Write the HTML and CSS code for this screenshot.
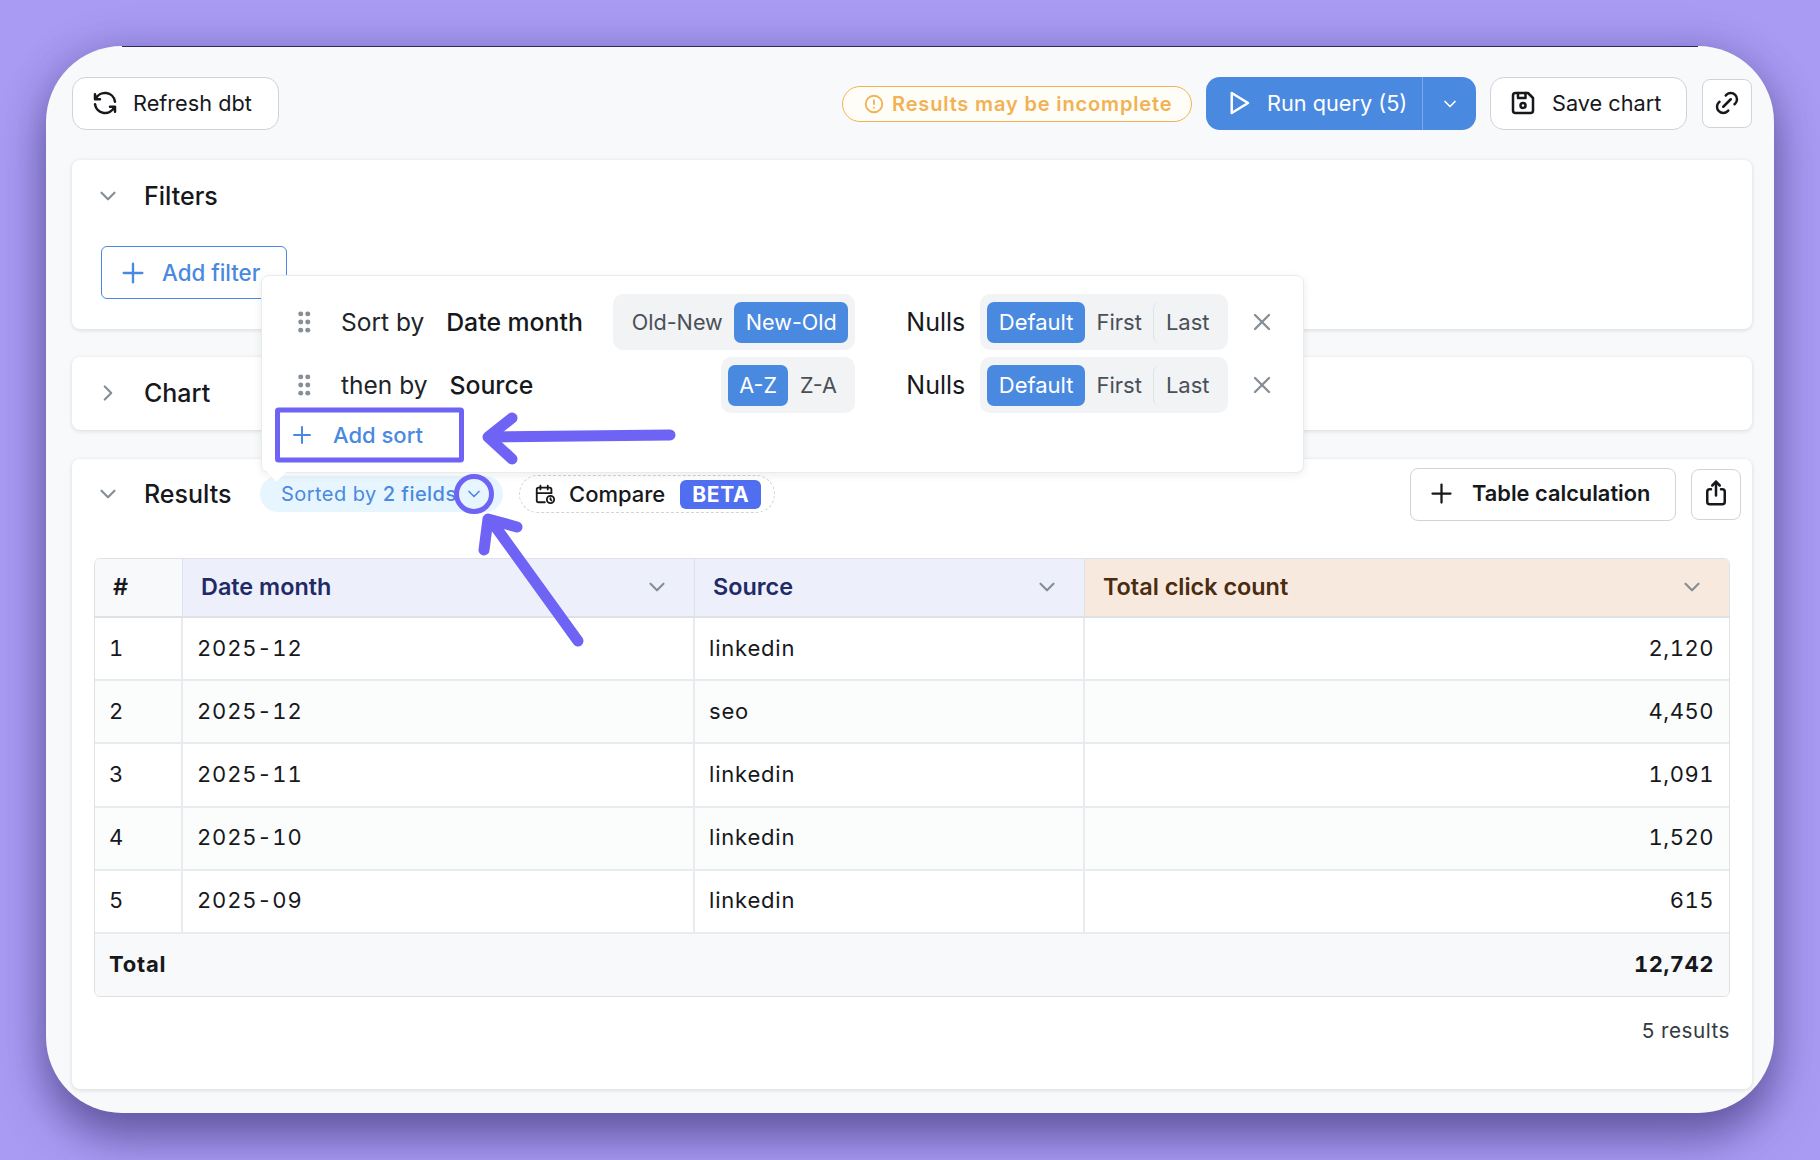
FILE: index.html
```html
<!DOCTYPE html>
<html lang="en">
<head>
    <meta charset="UTF-8">
    <title>Results sorting</title>
    <link rel="stylesheet" href="styles.css">
</head>
<body>
    <svg class="sprite" xmlns="http://www.w3.org/2000/svg">
        <symbol id="i-refresh" viewBox="0 0 24 24"><path d="M20 11a8.1 8.1 0 0 0 -15.5 -2m-.5 -4v4h4"/><path d="M4 13a8.1 8.1 0 0 0 15.5 2m.5 4v-4h-4"/></symbol>
        <symbol id="i-alert" viewBox="0 0 24 24"><circle cx="12" cy="12" r="9"/><path d="M12 8v4"/><path d="M12 16h.01"/></symbol>
        <symbol id="i-play" viewBox="0 0 24 24"><path d="M7 4v16l13 -8z"/></symbol>
        <symbol id="i-down" viewBox="0 0 24 24"><path d="M6 9l6 6l6 -6"/></symbol>
        <symbol id="i-right" viewBox="0 0 24 24"><path d="M9 6l6 6l-6 6"/></symbol>
        <symbol id="i-save" viewBox="0 0 24 24"><path d="M6 4h10l4 4v10a2 2 0 0 1 -2 2h-12a2 2 0 0 1 -2 -2v-12a2 2 0 0 1 2 -2"/><circle cx="12" cy="14" r="2"/><path d="M14 4v4h-6v-4"/></symbol>
        <symbol id="i-link" viewBox="0 0 24 24"><path d="M9 15l6 -6"/><path d="M11 6l.463 -.536a5 5 0 0 1 7.071 7.072l-.534 .464"/><path d="M13 18l-.397 .534a5.068 5.068 0 0 1 -7.127 0a4.972 4.972 0 0 1 0 -7.071l.524 -.463"/></symbol>
        <symbol id="i-plus" viewBox="0 0 24 24"><path d="M12 4v16"/><path d="M4 12h16"/></symbol>
        <symbol id="i-x" viewBox="0 0 24 24"><path d="M18 6l-12 12"/><path d="M6 6l12 12"/></symbol>
        <symbol id="i-share" viewBox="0 0 24 24"><path d="M8 9h-1a2 2 0 0 0 -2 2v8a2 2 0 0 0 2 2h10a2 2 0 0 0 2 -2v-8a2 2 0 0 0 -2 -2h-1"/><path d="M12 14v-11"/><path d="M9 6l3 -3l3 3"/></symbol>
        <symbol id="i-cal" viewBox="0 0 24 24"><path d="M11.795 21h-6.795a2 2 0 0 1 -2 -2v-12a2 2 0 0 1 2 -2h12a2 2 0 0 1 2 2v4"/><circle cx="18" cy="18" r="4"/><path d="M15 3v4"/><path d="M7 3v4"/><path d="M3 11h16"/><path d="M18 16.496v1.504l1 1"/></symbol>
        <symbol id="i-grip" viewBox="0 0 24 24"><circle cx="9" cy="4.5" r="2.3"/><circle cx="9" cy="12" r="2.3"/><circle cx="9" cy="19.5" r="2.3"/><circle cx="15.5" cy="4.5" r="2.3"/><circle cx="15.5" cy="12" r="2.3"/><circle cx="15.5" cy="19.5" r="2.3"/></symbol>
    </svg>

    <div class="window">
        <div class="topbar">
            <button class="btn btn-refresh"><svg class="icon icon-30"><use href="#i-refresh"/></svg>Refresh dbt</button>
            <div class="warning"><svg class="icon icon-22"><use href="#i-alert"/></svg>Results may be incomplete</div>
            <div class="run">
                <div class="run-main"><svg class="icon icon-30"><use href="#i-play"/></svg>Run query (5)</div>
                <div class="run-more"><svg class="icon icon-20"><use href="#i-down"/></svg></div>
            </div>
            <button class="btn btn-save"><svg class="icon icon-30"><use href="#i-save"/></svg>Save chart</button>
            <button class="btn btn-link"><svg class="icon icon-30"><use href="#i-link"/></svg></button>
        </div>

        <div class="card card-filters">
            <div class="card-head">
                <svg class="icon icon-26 muted"><use href="#i-down"/></svg>
                <span class="card-title">Filters</span>
            </div>
            <button class="btn-add-filter"><svg class="icon icon-28"><use href="#i-plus"/></svg>Add filter</button>
        </div>

        <div class="card card-chart">
            <div class="card-head">
                <svg class="icon icon-26 muted"><use href="#i-right"/></svg>
                <span class="card-title">Chart</span>
            </div>
        </div>

        <div class="card card-results">
            <div class="results-head">
                <svg class="icon icon-26 muted results-chevron"><use href="#i-down"/></svg>
                <span class="card-title results-title">Results</span>
                <div class="sorted-pill">Sorted by <b>2 fields</b><svg class="icon icon-20"><use href="#i-down"/></svg></div>
                <div class="compare-pill">
                    <svg class="icon icon-22"><use href="#i-cal"/></svg>
                    <span>Compare</span>
                    <span class="beta">BETA</span>
                </div>
                <button class="btn btn-calc"><svg class="icon icon-27"><use href="#i-plus"/></svg>Table calculation</button>
                <button class="btn btn-share"><svg class="icon icon-30"><use href="#i-share"/></svg></button>
            </div>

            <table class="results-table">
                <colgroup>
                    <col class="col-num"><col class="col-date"><col class="col-source"><col>
                </colgroup>
                <thead>
                    <tr>
                        <th class="th-num">#</th>
                        <th class="th-dim"><div class="th-inner">Date month<svg class="icon icon-26 muted"><use href="#i-down"/></svg></div></th>
                        <th class="th-dim"><div class="th-inner">Source<svg class="icon icon-26 muted"><use href="#i-down"/></svg></div></th>
                        <th class="th-metric"><div class="th-inner">Total click count<svg class="icon icon-26 muted"><use href="#i-down"/></svg></div></th>
                    </tr>
                </thead>
                <tbody>
                    <tr><td>1</td><td>2025-12</td><td>linkedin</td><td class="num">2,120</td></tr>
                    <tr class="alt"><td>2</td><td>2025-12</td><td>seo</td><td class="num">4,450</td></tr>
                    <tr><td>3</td><td>2025-11</td><td>linkedin</td><td class="num">1,091</td></tr>
                    <tr class="alt"><td>4</td><td>2025-10</td><td>linkedin</td><td class="num">1,520</td></tr>
                    <tr><td>5</td><td>2025-09</td><td>linkedin</td><td class="num">615</td></tr>
                </tbody>
                <tfoot>
                    <tr><td colspan="3">Total</td><td class="num">12,742</td></tr>
                </tfoot>
            </table>
            <div class="results-count">5 results</div>
        </div>

        <div class="sort-popover">
            <div class="sort-row">
                <svg class="icon-grip"><use href="#i-grip"/></svg>
                <span class="sort-label">Sort by</span>
                <span class="sort-field">Date month</span>
                <div class="toggle toggle-dir">
                    <span class="opt">Old-New</span><span class="opt on">New-Old</span>
                </div>
                <span class="nulls">Nulls</span>
                <div class="toggle">
                    <span class="opt on">Default</span><span class="opt">First</span><span class="opt sep">Last</span>
                </div>
                <svg class="icon icon-28 muted close"><use href="#i-x"/></svg>
            </div>
            <div class="sort-row">
                <svg class="icon-grip"><use href="#i-grip"/></svg>
                <span class="sort-label">then by</span>
                <span class="sort-field">Source</span>
                <div class="toggle toggle-dir">
                    <span class="opt on">A-Z</span><span class="opt">Z-A</span>
                </div>
                <span class="nulls">Nulls</span>
                <div class="toggle">
                    <span class="opt on">Default</span><span class="opt">First</span><span class="opt sep">Last</span>
                </div>
                <svg class="icon icon-28 muted close"><use href="#i-x"/></svg>
            </div>
            <div class="add-sort"><svg class="icon icon-24"><use href="#i-plus"/></svg>Add sort</div>
        </div>
    </div>

    <!-- hand drawn annotations on top of the screenshot -->
    <svg class="marks" viewBox="0 0 1820 1160" xmlns="http://www.w3.org/2000/svg">
        <rect x="277.5" y="410" width="184" height="50" rx="1"/>
        <circle cx="474" cy="494" r="17.5"/>
        <g class="arrow">
            <path d="M670 435L490 437"/>
            <path d="M512 418L488 437L512 459"/>
            <path d="M578 641L492 522"/>
            <path d="M517 527L488 519L484 550"/>
        </g>
    </svg>
</body>
</html>
```

FILE: styles.css
```css
* {
    box-sizing: border-box;
}

html, body {
    margin: 0;
    height: 100%;
}

body {
    position: relative;
    overflow: hidden;
    padding: 46px;
    background: #a99bf4;
    font-family: Inter, "Liberation Sans", sans-serif;
    font-size: 21.7px;
    color: #16181c;
}

.sprite {
    display: none;
}

.icon {
    flex: none;
    fill: none;
    stroke: currentColor;
    stroke-width: 2;
    stroke-linecap: round;
    stroke-linejoin: round;
}

.icon-20 { width: 20px; height: 20px; }
.icon-22 { width: 22px; height: 22px; }
.icon-24 { width: 24px; height: 24px; }
.icon-26 { width: 26px; height: 26px; }
.icon-27 { width: 27px; height: 27px; }
.icon-28 { width: 28px; height: 28px; }
.icon-30 { width: 30px; height: 30px; }

.muted {
    color: #868e96;
}

/* window */
.window {
    position: relative;
    width: 1728px;
    height: 1067px;
    padding: 31px 22px 22px 26px;
    background: #f8f9fa;
    border-radius: 76px;
    box-shadow: 0 26px 44px rgba(45, 35, 100, 0.5), 0 0 40px rgba(45, 35, 100, 0.22);
}

.window::before {
    content: "";
    position: absolute;
    top: 0;
    left: 76px;
    right: 76px;
    height: 1px;
    background: #2c2a5e;
}

/* top bar */
.topbar {
    display: flex;
    align-items: center;
    height: 53px;
}

.btn {
    display: flex;
    align-items: center;
    justify-content: center;
    height: 53px;
    padding: 0 0 2px;
    background: #fff;
    border: 1px solid #ced4da;
    border-radius: 14px;
    font: inherit;
    color: inherit;
}

.btn-refresh {
    justify-content: flex-start;
    width: 207px;
    padding-left: 17px;
    gap: 13px;
}

.warning {
    display: flex;
    align-items: center;
    gap: 7px;
    width: 350px;
    height: 36px;
    margin-left: auto;
    padding-left: 20px;
    border: 1px solid #f0b254;
    border-radius: 18px;
    background: #fffdf8;
    color: #f0b254;
    font-size: 20px;
    font-weight: 600;
    letter-spacing: 0.85px;
}

.run {
    display: flex;
    width: 270px;
    height: 53px;
    margin-left: 14px;
    background: #4a89e0;
    border-radius: 14px;
    color: #fff;
}

.run-main {
    display: flex;
    align-items: center;
    gap: 14px;
    width: 217px;
    padding: 0 0 2px 17px;
    border-right: 1px solid #7ea9e8;
}

.run-more {
    display: flex;
    flex: 1;
    align-items: center;
    justify-content: center;
}

.btn-save {
    justify-content: flex-start;
    width: 197px;
    margin-left: 14px;
    padding-left: 17px;
    gap: 14px;
}

.btn-link {
    width: 50px;
    height: 49px;
    margin-left: 15px;
    border-radius: 8px;
}

/* cards */
.card {
    background: #fff;
    border-radius: 8px;
    box-shadow: 0 1px 4px rgba(20, 20, 40, 0.14);
}

.card-head {
    display: flex;
    align-items: center;
    gap: 23px;
    height: 72px;
    padding-left: 23px;
}

.card-title {
    font-size: 25px;
    font-weight: 500;
}

.card-filters {
    height: 169px;
    margin-top: 30px;
}

.btn-add-filter {
    display: flex;
    align-items: center;
    gap: 15px;
    width: 186px;
    height: 53px;
    margin: 14px 0 0 29px;
    padding: 0 0 0 17px;
    background: #fff;
    border: 1px solid #4a89e0;
    border-radius: 6px;
    color: #4a89e0;
    font: inherit;
    font-size: 22.3px;
    font-weight: 500;
}

.card-chart {
    height: 73px;
    margin-top: 28px;
}

.card-results {
    height: 630px;
    margin-top: 29px;
    padding: 8px 11px 0 22px;
}

.results-head {
    display: flex;
    align-items: center;
    height: 54px;
}

.results-chevron {
    margin-left: 1px;
}

.results-title {
    width: 116px;
    margin-left: 23px;
}

.sorted-pill {
    display: flex;
    align-items: center;
    width: 243px;
    height: 36px;
    padding-left: 21px;
    background: #e7f5ff;
    border-radius: 18px;
    color: #4a89e0;
    font-size: 20px;
    letter-spacing: 0.45px;
    white-space: pre;
}

.sorted-pill b {
    font-weight: 500;
}

.sorted-pill .icon {
    margin-left: 7px;
}

.compare-pill {
    display: flex;
    align-items: center;
    width: 256px;
    height: 38px;
    margin-left: 16px;
    padding-left: 14px;
    border: 1px dashed #ced4da;
    border-radius: 19px;
    font-size: 22px;
    font-weight: 500;
}

.compare-pill span:first-of-type {
    margin-left: 13px;
}

.beta {
    margin-left: 15px;
    padding: 0 12px;
    height: 29px;
    line-height: 29px;
    background: #4f6ff0;
    border-radius: 6px;
    color: #fff;
    font-size: 21px;
    font-weight: 700;
    letter-spacing: 0.6px;
}

.btn-calc {
    justify-content: flex-start;
    width: 266px;
    margin-left: auto;
    padding-left: 17px;
    gap: 17px;
    border-radius: 8px;
    font-size: 21.8px;
    font-weight: 600;
}

.btn-share {
    width: 50px;
    height: 51px;
    margin-left: 15px;
    border-radius: 8px;
}

/* table */
.results-table {
    width: 1636px;
    margin-top: 37px;
    border: 1px solid #dee2e6;
    border-radius: 6px;
    border-collapse: separate;
    border-spacing: 0;
    table-layout: fixed;
    overflow: hidden;
}

.col-num { width: 88px; }
.col-date { width: 512px; }
.col-source { width: 390px; }

.results-table th {
    height: 59px;
    padding: 0 24px 2px 18px;
    border-bottom: 2px solid #dee2e6;
    border-right: 1px solid #dee2e6;
    font-size: 23.4px;
    font-weight: 600;
    text-align: left;
}

.results-table th:last-child,
.results-table td:last-child {
    border-right: none;
}

.th-num {
    background: #f8f9fa;
}

.th-dim {
    background: #edf0fb;
    color: #1f2a66;
}

.th-metric {
    background: #f8e9df;
    color: #4a2c10;
}

.th-inner {
    display: flex;
    align-items: center;
    justify-content: space-between;
}

.results-table td {
    height: 63.2px;
    padding: 0 14px 2px;
    border-bottom: 2px solid #e9ecef;
    border-right: 2px solid #e9ecef;
    font-size: 22px;
    font-variant-numeric: tabular-nums;
    letter-spacing: 0.8px;
}

.results-table tr.alt td {
    background: #fbfcfc;
}

.results-table td.num {
    padding-right: 15px;
    letter-spacing: 0.5px;
    text-align: right;
}

.results-table tfoot td {
    height: 62px;
    border: none;
    background: #f8f9fa;
    font-weight: 700;
}

.results-count {
    width: 1636px;
    margin-top: 21px;
    color: #343a40;
    font-size: 20.7px;
    letter-spacing: 0.5px;
    text-align: right;
}

/* sort popover */
.sort-popover {
    position: absolute;
    left: 215px;
    top: 229px;
    width: 1043px;
    height: 198px;
    padding: 18px 0 0 0;
    background: #fff;
    border: 1px solid #e9ecef;
    border-radius: 8px;
    box-shadow: 0 2px 8px rgba(20, 20, 40, 0.08);
}

.sort-popover::after {
    content: "";
    position: absolute;
    left: 8px;
    bottom: -7px;
    width: 13px;
    height: 13px;
    background: #fff;
    transform: rotate(45deg);
}

.sort-row {
    display: flex;
    align-items: center;
    height: 56px;
    margin-bottom: 7px;
    padding-left: 29px;
}

.icon-grip {
    flex: none;
    width: 26px;
    height: 26px;
    fill: #868e96;
}

.sort-label {
    margin-left: 24px;
    color: #212529;
    font-size: 24.5px;
}

.sort-field {
    margin-left: 22px;
    font-size: 24.8px;
    font-weight: 500;
}

.toggle {
    display: flex;
    align-items: center;
    height: 56px;
    padding: 0 7px;
    background: #f1f3f5;
    border-radius: 10px;
    font-size: 22px;
}

.toggle-dir {
    margin-left: auto;
    font-size: 21.6px;
}

.opt {
    display: flex;
    align-items: center;
    height: 41px;
    padding: 0 11.5px;
    border-radius: 7px;
    color: #495057;
}

.opt.on {
    background: #4a89e0;
    color: #fff;
}

.opt.sep {
    border-left: 1px solid #dee2e6;
}

.nulls {
    margin-left: 51px;
    margin-right: 15px;
    font-size: 25px;
}

.close {
    margin: 0 27px 0 20px;
}

.add-sort {
    display: flex;
    align-items: center;
    gap: 19px;
    height: 55px;
    margin-top: -13px;
    margin-left: 28px;
    color: #4a89e0;
    font-size: 22px;
    font-weight: 500;
}

/* annotations */
.marks {
    position: absolute;
    left: 0;
    top: 0;
    width: 1820px;
    height: 1160px;
    fill: none;
    stroke: #6f63f5;
    stroke-width: 5;
    pointer-events: none;
}

.arrow path {
    stroke-width: 11;
    stroke-linecap: round;
    stroke-linejoin: round;
}
```
